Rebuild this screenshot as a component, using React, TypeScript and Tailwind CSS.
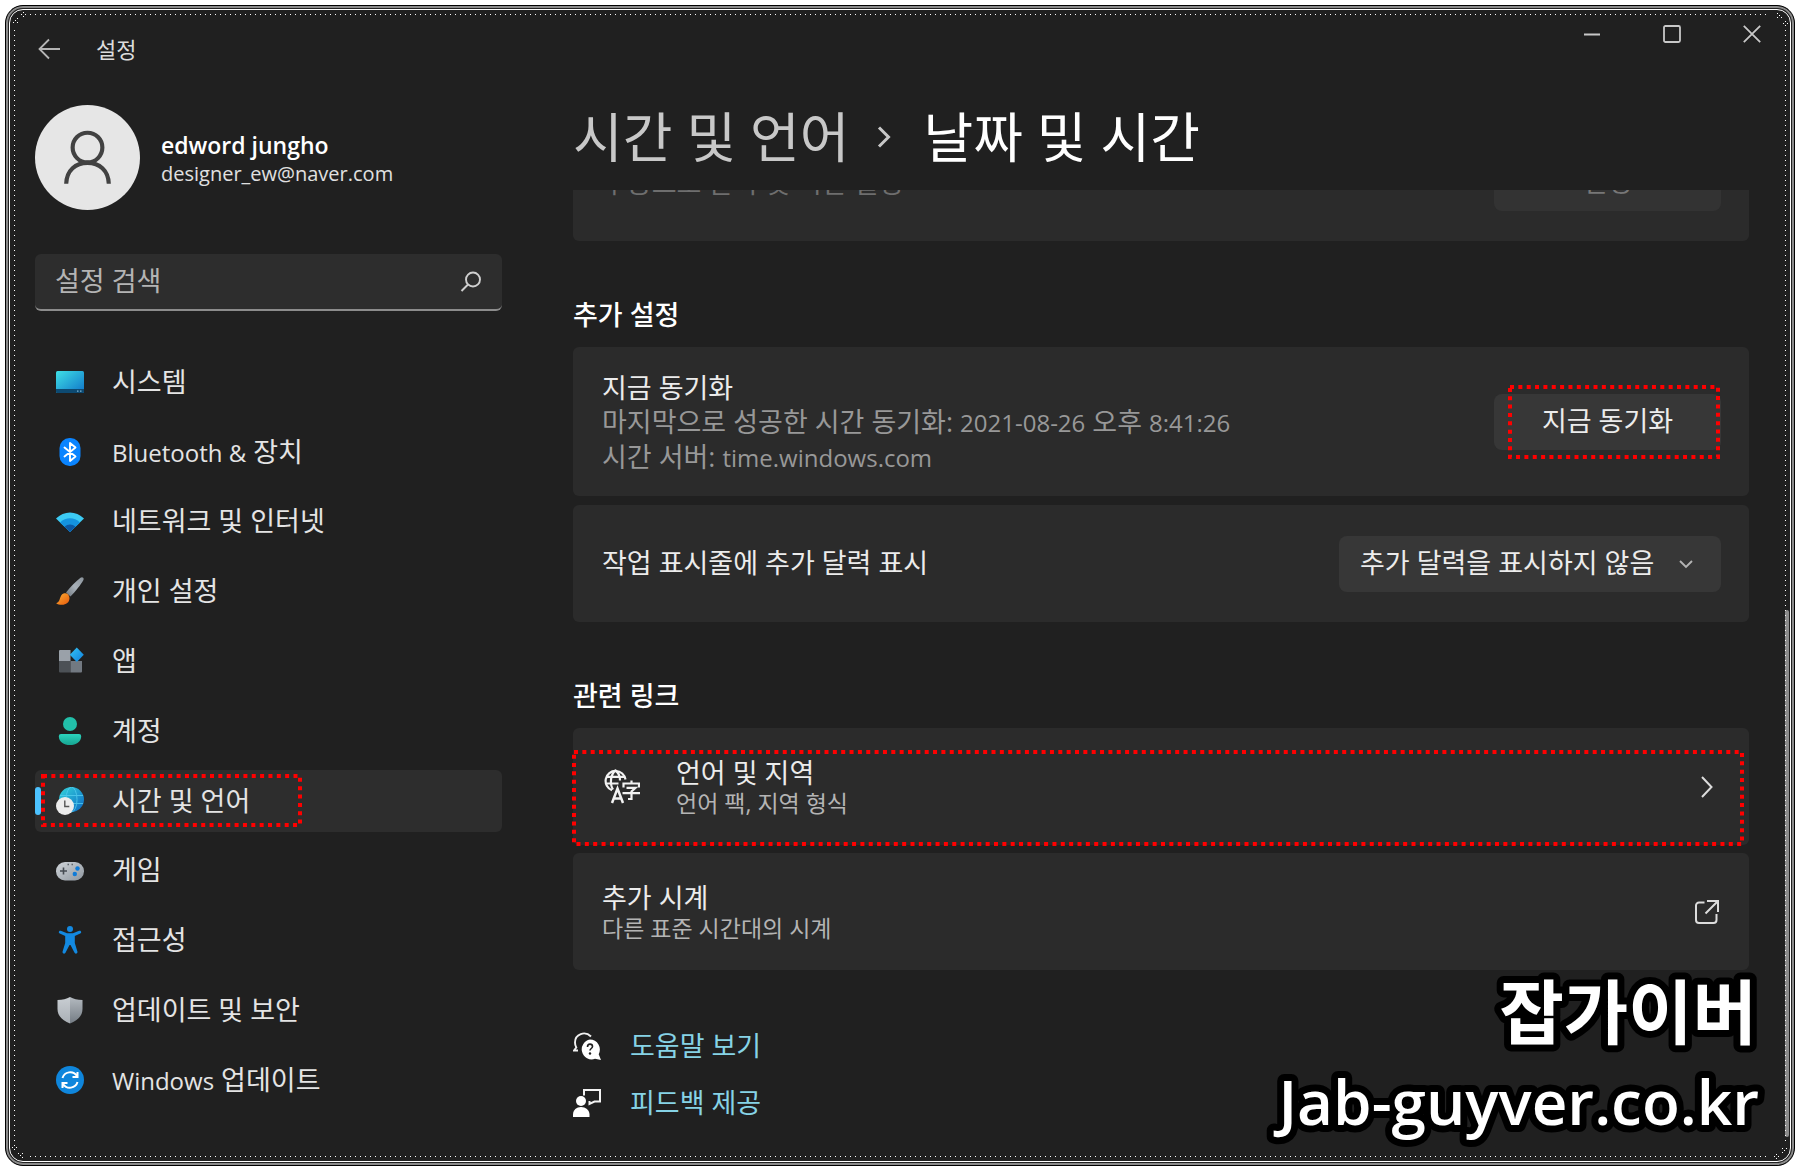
import type { ReactNode } from "react";

const Latin = ({ children }: { children: ReactNode }) => (
  <span className="text-[24px]">{children}</span>
);

/* Red dotted frame laid over the highlighted controls */
const DottedFrame = ({ className }: { className: string }) => (
  <svg
    className={`absolute overflow-visible pointer-events-none z-10 ${className}`}
    aria-hidden="true"
  >
    <rect
      width="100%"
      height="100%"
      fill="none"
      stroke="#ff0000"
      strokeWidth="4"
      strokeDasharray="4 4.35"
    />
  </svg>
);

const SystemIcon = () => (
  <svg viewBox="0 0 28 28" className="size-7">
    <defs>
      <linearGradient id="sys" x1="0" y1="0" x2="1" y2="1">
        <stop offset="0" stopColor="#3fe0e6" />
        <stop offset="1" stopColor="#0f74c8" />
      </linearGradient>
    </defs>
    <rect x="0" y="3" width="28" height="22" rx="1.500" fill="url(#sys)" />
    <path d="M0 21h28v2.500a1.500 1.500 0 0 1-1.500 1.500h-25A1.500 1.500 0 0 1 0 23.500z" fill="#0d4a72" />
    <path d="M21 22.500h1.500v1.300H21zM24 22.500h1.500v1.300H24z" fill="#7fb4d4" />
  </svg>
);

const BluetoothIcon = () => (
  <svg viewBox="0 0 28 28" className="size-7">
    <rect x="3.500" y="0" width="21" height="28" rx="10" fill="#0a84ff" />
    <path
      d="M8.500 9.500l11 9-5.500 4.500V5l5.500 4.500-11 9"
      fill="none"
      stroke="#fff"
      strokeWidth="1.900"
      strokeLinejoin="round"
      strokeLinecap="round"
    />
  </svg>
);

const WifiIcon = () => (
  <svg viewBox="0 0 28 28" className="size-7">
    <path d="M0 10.500C8 2.500 20 2.500 28 10.500L14 24z" fill="#3ccbf4" />
    <path d="M4 14.400c6-5.500 14-5.500 20 0L14 24z" fill="#1493df" />
    <path d="M8.500 18.700c3.500-3 7.500-3 11 0L14 24z" fill="#0c59a4" />
  </svg>
);

const BrushIcon = () => (
  <svg viewBox="0 0 28 28" className="size-7">
    <defs>
      <linearGradient id="brushHandle" x1="1" y1="0" x2="0" y2="1">
        <stop offset="0" stopColor="#8b949c" />
        <stop offset=".5" stopColor="#a9b1b9" />
        <stop offset="1" stopColor="#6f777f" />
      </linearGradient>
      <linearGradient id="brushTip" x1="0" y1="0" x2="1" y2="1">
        <stop offset="0" stopColor="#fbb034" />
        <stop offset="1" stopColor="#e8590c" />
      </linearGradient>
    </defs>
    <path d="M24.500.8c2-1.600 4 .4 2.800 2.500C25 7.500 19.500 14.500 14.500 19.500L10 15.500C14.500 10 20 4.300 24.500.8z" fill="url(#brushHandle)" />
    <path d="M7.500 16.500c3-1.200 6 1 6 4.500 0 4.500-3.500 6.800-7.500 6.800-2.500 0-4.500-.6-5.800-1.600 4.600-1 3-8 7.300-9.700z" fill="url(#brushTip)" />
  </svg>
);

const AppsIcon = () => (
  <svg viewBox="0 0 28 28" className="size-7">
    <defs>
      <linearGradient id="appTile" x1="0" y1="0" x2="1" y2="1">
        <stop offset="0" stopColor="#35c4f5" />
        <stop offset="1" stopColor="#0f7fdc" />
      </linearGradient>
    </defs>
    <path d="M4 3h10.500v11H3V4a1 1 0 0 1 1-1z" fill="#9aa1a9" />
    <path d="M3 14h11.500v11.500H4a1 1 0 0 1-1-1z" fill="#4c5156" />
    <path d="M14.500 14H26v10.500a1 1 0 0 1-1 1H14.500z" fill="#727981" />
    <path d="M20.800.5l7 7.300-7 7.300-7-7.300z" fill="url(#appTile)" />
  </svg>
);

const AccountIcon = () => (
  <svg viewBox="0 0 28 28" className="size-7">
    <defs>
      <linearGradient id="acct" x1="0" y1="0" x2="0" y2="1">
        <stop offset="0" stopColor="#2bd4bd" />
        <stop offset="1" stopColor="#17a592" />
      </linearGradient>
    </defs>
    <circle cx="14" cy="7" r="7" fill="#22bfa9" />
    <path d="M5 17h18a2.200 2.200 0 0 1 2.200 2.200C25.200 25 20 28 14 28S2.800 25 2.800 19.200A2.200 2.200 0 0 1 5 17z" fill="url(#acct)" />
  </svg>
);

const TimeIcon = () => (
  <svg viewBox="0 0 28 28" className="size-7">
    <defs>
      <linearGradient id="globe" x1="0" y1="0" x2="1" y2="1">
        <stop offset="0" stopColor="#35d6dc" />
        <stop offset="1" stopColor="#0b66c2" />
      </linearGradient>
    </defs>
    <circle cx="15.500" cy="12.500" r="12.500" fill="url(#globe)" />
    <g fill="none" stroke="#54cdf0" strokeWidth="1" opacity=".8">
      <ellipse cx="15.500" cy="12.500" rx="5.500" ry="12.500" />
      <path d="M4 8.500h23M4 16.500h23" />
    </g>
    <circle cx="9" cy="19" r="9" fill="#ececec" />
    <path d="M8.800 13.500v6h4.500" fill="none" stroke="#555" strokeWidth="1.400" />
  </svg>
);

const GameIcon = () => (
  <svg viewBox="0 0 28 28" className="size-7">
    <defs>
      <linearGradient id="pad" x1="0" y1="0" x2="1" y2="1">
        <stop offset="0" stopColor="#d0d5da" />
        <stop offset="1" stopColor="#8f979f" />
      </linearGradient>
    </defs>
    <rect x="0" y="5" width="28" height="18.500" rx="9" fill="url(#pad)" />
    <path d="M7.500 10.500v7M4 14h7" stroke="#454b52" strokeWidth="1.600" />
    <circle cx="21.500" cy="11.500" r="2.200" fill="#0f7bd8" />
    <circle cx="18.800" cy="17" r="2.200" fill="#0f7bd8" />
    <path d="M11.500 7.500h1.500M15.500 7.500H17" stroke="#5d646b" strokeWidth="1.400" />
  </svg>
);

const AccessIcon = () => (
  <svg viewBox="0 0 28 28" className="size-7" fill="#1389e0">
    <circle cx="14" cy="3" r="3" />
    <path d="M4.800 4.800L11 7.200h6l6.200-2.400c2-.6 2.800 2 1 2.800L18.800 10v7l2.600 8.600c.5 2-2.200 3-3 1L14.500 19h-1l-3.900 7.600c-.8 2-3.500 1-3-1L9.200 17v-7L3.800 7.600c-1.800-.8-1-3.400 1-2.800z" />
  </svg>
);

const ShieldIcon = () => (
  <svg viewBox="0 0 28 28" className="size-7">
    <defs>
      <linearGradient id="shieldLeft" x1="0" y1="0" x2="0" y2="1">
        <stop offset="0" stopColor="#c9ced3" />
        <stop offset="1" stopColor="#a9afb5" />
      </linearGradient>
      <linearGradient id="shieldRight" x1="0" y1="0" x2="0" y2="1">
        <stop offset="0" stopColor="#b4bac0" />
        <stop offset="1" stopColor="#747c84" />
      </linearGradient>
    </defs>
    <path d="M14 1c3.500 2 7.500 3 12.500 3v9c0 7-5 11.500-12.500 14.500z" fill="url(#shieldRight)" />
    <path d="M14 1C10.500 3 6.500 4 1.500 4v9c0 7 5 11.500 12.500 14.500z" fill="url(#shieldLeft)" />
  </svg>
);

const UpdateIcon = () => (
  <svg viewBox="0 0 28 28" className="size-7">
    <circle cx="14" cy="14" r="14" fill="#0f86dc" />
    <g fill="none" stroke="#fff" strokeWidth="2">
      <path d="M6.500 12a8 8 0 0 1 14.300-2.200M21.500 6v5h-5" />
      <path d="M21.500 16a8 8 0 0 1-14.300 2.200M6.500 22v-5h5" />
    </g>
  </svg>
);

const LanguageIcon = () => (
  <svg viewBox="0 0 36 36" className="size-9" fill="none" stroke="#f2f2f2" strokeWidth="2.200">
    <path d="M8 21.300A10 10 0 1 1 21.500 10.500" />
    <path d="M9 20.500C5.500 15 6.500 5 11.500 1.500 15 4 16 8 16 11.500M2.500 7.800h18M2.500 14.500h12" />
    <path d="M8 34l5.500-14.500L19 34M10 29.500h7" strokeWidth="2.500" />
    <path d="M19.500 18.500V14.500h15.500v4M27.500 11.500v3M22.500 18.800h9l-4 3.700V30h-3.500M18.500 24.200H36" strokeWidth="2.200" />
  </svg>
);

const HelpIcon = () => (
  <svg viewBox="0 0 28 28" className="size-7">
    <path
      d="M18 4.500C12-1.500 2 2 2 10.500c0 2 .4 3.400 1.300 5L1 18.500h4"
      fill="none"
      stroke="#f2f2f2"
      strokeWidth="1.900"
    />
    <path d="M17 7.500a10 10 0 0 1 8.700 14.700L28 28l-6-1.200A10 10 0 1 1 17 7.500z" fill="#fff" />
    <path d="M14.500 15c0-4 5-3.500 5-.5 0 2-2.500 2-2.500 4" fill="none" stroke="#202020" strokeWidth="1.600" />
    <circle cx="17" cy="21.500" r="1.200" fill="#202020" />
  </svg>
);

const FeedbackIcon = () => (
  <svg viewBox="0 0 28 28" className="size-7">
    <path d="M11 6.500V1h16v11.500h-5.500L16.500 15v-3" fill="none" stroke="#f2f2f2" strokeWidth="2" />
    <circle cx="8" cy="12" r="5" fill="#fff" />
    <path d="M0 28v-2.500C0 21 3.500 18 8 18s8.500 3 8.500 7.500V28z" fill="#fff" />
  </svg>
);

const navItems: { label: ReactNode; icon: ReactNode; active?: boolean }[] = [
  { label: "시스템", icon: <SystemIcon /> },
  { label: <><Latin>Bluetooth &amp;</Latin> 장치</>, icon: <BluetoothIcon /> },
  { label: "네트워크 및 인터넷", icon: <WifiIcon /> },
  { label: "개인 설정", icon: <BrushIcon /> },
  { label: "앱", icon: <AppsIcon /> },
  { label: "계정", icon: <AccountIcon /> },
  { label: "시간 및 언어", icon: <TimeIcon />, active: true },
  { label: "게임", icon: <GameIcon /> },
  { label: "접근성", icon: <AccessIcon /> },
  { label: "업데이트 및 보안", icon: <ShieldIcon /> },
  { label: <><Latin>Windows</Latin> 업데이트</>, icon: <UpdateIcon /> },
];

const TitleBar = () => (
  <header className="flex items-start justify-between pl-8 pr-[33px]">
    <div className="flex items-center gap-9 pt-7">
      <button type="button" aria-label="뒤로">
        <svg viewBox="0 0 22 22" className="size-[22px]" fill="none" stroke="#b4b4b4" strokeWidth="1.800">
          <path d="M22 11H1.500M11 1.500L1.500 11l9.500 9.500" />
        </svg>
      </button>
      <span className="text-[22px] leading-[30px] text-[#dcdcdc]">설정</span>
    </div>
    <div className="flex gap-[62px] pt-[19px]">
      <button type="button" aria-label="최소화">
        <svg viewBox="0 0 18 18" className="size-[18px]" fill="none" stroke="#c8c8c8" strokeWidth="1.800">
          <path d="M1 9.500h16" />
        </svg>
      </button>
      <button type="button" aria-label="최대화">
        <svg viewBox="0 0 18 18" className="size-[18px]" fill="none" stroke="#c8c8c8" strokeWidth="1.800">
          <rect x="1" y="1" width="16" height="16" rx="1.500" />
        </svg>
      </button>
      <button type="button" aria-label="닫기">
        <svg viewBox="0 0 18 18" className="size-[18px]" fill="none" stroke="#c8c8c8" strokeWidth="1.800">
          <path d="M.8.8l16.400 16.400M17.200.8L.8 17.200" />
        </svg>
      </button>
    </div>
  </header>
);

const Sidebar = () => (
  <aside className="w-[467px] shrink-0 pt-5">
    <div className="flex items-center gap-[21px]">
      <svg viewBox="0 0 106 106" className="size-[105px] shrink-0" aria-hidden="true">
        <circle cx="53" cy="53" r="53" fill="#e6e6e6" />
        <g fill="none" stroke="#424242" strokeWidth="4.200">
          <circle cx="53" cy="43" r="15" />
          <path d="M31.500 79.500C32 66 41 58.500 53 58.500S74 66 74.500 79.500" />
        </g>
      </svg>
      <div className="pt-[2px]">
        <p className="text-[23px] leading-[30px] font-semibold text-white">edword jungho</p>
        <p className="text-[20px] leading-7 text-[#e0e0e0]">designer_ew@naver.com</p>
      </div>
    </div>

    <label className="mt-11 flex h-[57px] items-center rounded-md border-b-2 border-[#8c8c8c] bg-[#2d2d2d] px-5">
      <input
        type="text"
        aria-label="설정 검색"
        placeholder="설정 검색"
        className="min-w-0 flex-1 bg-transparent text-[27px] text-white outline-none placeholder:text-[#b4b4b4]"
      />
      <svg viewBox="0 0 22 22" className="size-[22px]" fill="none" stroke="#cfcfcf" strokeWidth="1.900">
        <circle cx="13" cy="8.500" r="7" />
        <path d="M8 13.500L1.500 20" />
      </svg>
    </label>

    <nav className="mt-10">
      <ul className="flex h-[760px] flex-col justify-between">
        {navItems.map((item, i) => (
          <li key={i} className="relative">
            <a
              href="#"
              className={`flex h-[62px] items-center gap-7 rounded-md pl-[21px] text-[27px] text-[#e4e4e4] ${
                item.active ? "bg-[#2d2d2d]" : ""
              }`}
            >
              {item.icon}
              <span>{item.label}</span>
            </a>
            {item.active && (
              <>
                <span className="absolute left-0 top-[17px] h-7 w-[6px] rounded-full bg-[#4cc2ff]" />
                <DottedFrame className="left-2 top-[6px] h-[49px] w-[257px]" />
              </>
            )}
          </li>
        ))}
      </ul>
    </nav>
  </aside>
);

const Card = ({ className = "", children }: { className?: string; children: ReactNode }) => (
  <div className={`relative flex items-center justify-between rounded-md bg-[#2b2b2b] pl-[29px] pr-7 ${className}`}>
    {children}
  </div>
);

const Content = () => (
  <main className="min-w-0 flex-1 pt-[13px]">
    <h1 className="flex items-center text-[54px] leading-[78px] text-white">
      <a href="#" className="text-[#c8c8c8]">시간 및 언어</a>
      <svg viewBox="0 0 14 22" className="ml-7 mr-8 h-[22px] w-[14px]" fill="none" stroke="#c8c8c8" strokeWidth="3">
        <path d="M2 1.500L11.500 11 2 20.500" />
      </svg>
      <span>날짜 및 시간</span>
    </h1>

    {/* Card scrolled partly under the heading */}
    <div className="mt-[14px] flex h-[51px] flex-col justify-end overflow-hidden">
      <Card className="h-[117px] shrink-0">
        <p className="text-[27px] leading-7 text-[#6e6e6e]">수동으로 날짜 및 시간 설정</p>
        <button type="button" disabled className="h-14 w-[227px] rounded-lg bg-[#333333] text-[27px] text-[#777777]">
          변경
        </button>
      </Card>
    </div>

    <h2 className="mt-[56px] text-[27px] leading-9 font-medium text-white">추가 설정</h2>
    <div className="mt-[14px] flex flex-col gap-[9px]">
      <Card className="h-[149px]">
        <div className="pt-[2px] text-[27px] leading-[34px] text-[#989898]">
          <p className="text-[#ececec]">지금 동기화</p>
          <p>
            마지막으로 성공한 시간 동기화: <Latin>2021-08-26</Latin> 오후 <Latin>8:41:26</Latin>
          </p>
          <p>
            시간 서버: <Latin>time.windows.com</Latin>
          </p>
        </div>
        <div className="relative">
          <button type="button" className="h-14 w-[227px] rounded-lg bg-[#373737] text-[27px] text-[#ececec]">
            지금 동기화
          </button>
          <DottedFrame className="left-4 -top-[7px] h-[70px] w-[208px]" />
        </div>
      </Card>
      <Card className="h-[117px]">
        <label htmlFor="calendar" className="text-[27px] text-[#ececec]">
          작업 표시줄에 추가 달력 표시
        </label>
        <div className="relative">
          <select
            id="calendar"
            className="h-14 w-[382px] appearance-none rounded-lg bg-[#373737] pl-[21px] text-[27px] text-[#ececec]"
          >
            <option>추가 달력을 표시하지 않음</option>
          </select>
          <svg viewBox="0 0 14 9" className="pointer-events-none absolute right-7 top-6 h-[9px] w-[14px]" fill="none" stroke="#b4b4b4" strokeWidth="1.900">
            <path d="M1 1l6 6 6-6" />
          </svg>
        </div>
      </Card>
    </div>

    <h2 className="mt-[56px] text-[27px] leading-9 font-medium text-white">관련 링크</h2>
    <div className="mt-[14px] flex flex-col gap-2">
      <a href="#">
        <Card className="h-[117px]">
          <div className="flex items-center gap-9 pl-[2px]">
            <LanguageIcon />
            <div>
              <p className="text-[27px] leading-8 text-[#ececec]">언어 및 지역</p>
              <p className="text-[23px] leading-7 text-[#b4b4b4]">언어 팩, 지역 형식</p>
            </div>
          </div>
          <svg viewBox="0 0 14 22" className="mr-[7px] h-[22px] w-[14px]" fill="none" stroke="#dcdcdc" strokeWidth="2">
            <path d="M2 1l9.500 10L2 21" />
          </svg>
          <DottedFrame className="left-[1px] top-6 h-[92px] w-[calc(100%-8px)]" />
        </Card>
      </a>
      <a href="#">
        <Card className="h-[117px]">
          <div>
            <p className="text-[27px] leading-8 text-[#ececec]">추가 시계</p>
            <p className="text-[23px] leading-7 text-[#b4b4b4]">다른 표준 시간대의 시계</p>
          </div>
          <svg viewBox="0 0 24 24" className="mr-[2px] size-6" fill="none" stroke="#dcdcdc" strokeWidth="2">
            <path d="M9.500 2.500H4a3 3 0 0 0-3 3V20a3 3 0 0 0 3 3h14.500a3 3 0 0 0 3-3v-6M12 1h11v11M23 1L10.500 13.500" />
          </svg>
        </Card>
      </a>
    </div>

    <div className="mt-[56px] flex flex-col items-start gap-[17px] text-[27px] leading-10 text-[#86d3e6]">
      <a href="#" className="flex items-center gap-[29px]">
        <HelpIcon />
        도움말 보기
      </a>
      <a href="#" className="flex items-center gap-[29px]">
        <FeedbackIcon />
        피드백 제공
      </a>
    </div>
  </main>
);

const CornerDots = ({ className }: { className: string }) => (
  <svg viewBox="0 0 24 24" className={`absolute size-6 ${className}`} fill="#fff" shapeRendering="crispEdges">
    <path d="M17 6h1v1h-1zM15 8h1v1h-1zM19 8h1v1h-1zM17 10h1v1h-1zM11 12h1v1h-1zM9 14h1v1h-1zM7 16h1v1h-1zM11 16h1v1h-1z" />
  </svg>
);

/* Decorative window edge: grey band, white line and an inner row of dots */
const Frame = () => (
  <div className="pointer-events-none absolute inset-0" aria-hidden="true">
    <div className="absolute inset-0 rounded-[17px] border-2 border-[#8a8a8a]" />
    <div className="absolute inset-[3px] rounded-[14px] border border-white" />
    <div className="absolute left-6 right-6 top-2 h-px bg-[repeating-linear-gradient(90deg,#fff_0_1px,transparent_1px_5px)]" />
    <div className="absolute left-6 right-6 bottom-2 h-px bg-[repeating-linear-gradient(90deg,#fff_0_1px,transparent_1px_5px)]" />
    <div className="absolute bottom-6 left-2 top-6 w-px bg-[repeating-linear-gradient(180deg,#fff_0_1px,transparent_1px_5px)]" />
    <div className="absolute bottom-6 right-2 top-6 w-px bg-[repeating-linear-gradient(180deg,#fff_0_1px,transparent_1px_5px)]" />
    <CornerDots className="left-0 top-0" />
    <CornerDots className="right-0 top-0 rotate-90" />
    <CornerDots className="bottom-0 right-0 rotate-180" />
    <CornerDots className="bottom-0 left-0 -rotate-90" />
  </div>
);

const Watermark = () => (
  <svg
    className="pointer-events-none absolute bottom-0 right-0 h-[200px] w-[560px] font-semibold [paint-order:stroke]"
    fill="#fff"
    stroke="#000"
    strokeWidth="14"
    strokeLinejoin="round"
    textAnchor="end"
  >
    <text x="523" y="74" className="text-[70px]">잡가이버</text>
    <text x="525" y="160" className="text-[62px]">Jab-guyver.co.kr</text>
  </svg>
);

export default function App() {
  return (
    <div className="flex min-h-screen bg-white p-[5px] [font-family:'Open_Sans','Noto_Sans_CJK_KR',sans-serif]">
      <div className="relative min-w-0 flex-1 overflow-hidden rounded-[18px] border border-black bg-[#202020]">
        <div className="pb-9">
          <TitleBar />
          <div className="flex gap-[71px] pl-[29px] pr-[45px] pt-[21px]">
            <Sidebar />
            <Content />
          </div>
        </div>
        <span className="absolute bottom-7 right-[5px] h-[527px] w-1 rounded-full bg-[#8c8c8c]" />
        <Frame />
        <Watermark />
      </div>
    </div>
  );
}
